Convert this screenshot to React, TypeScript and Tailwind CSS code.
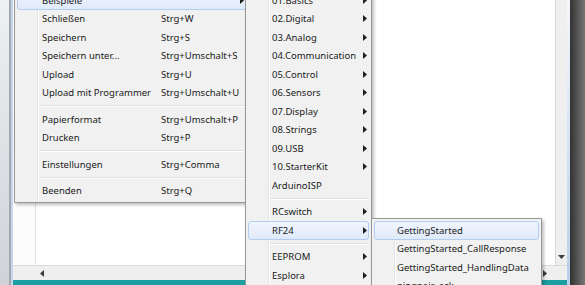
import React from 'react';

type Entry = {
    label?: string;
    shortcut?: string;
    sub?: boolean;
    active?: boolean;
    sep?: boolean;
};

const FILE_MENU: Entry[] = [
    { label: 'Beispiele', sub: true, active: true },
    { label: 'Schließen', shortcut: 'Strg+W' },
    { label: 'Speichern', shortcut: 'Strg+S' },
    { label: 'Speichern unter...', shortcut: 'Strg+Umschalt+S' },
    { label: 'Upload', shortcut: 'Strg+U' },
    { label: 'Upload mit Programmer', shortcut: 'Strg+Umschalt+U' },
    { sep: true },
    { label: 'Papierformat', shortcut: 'Strg+Umschalt+P' },
    { label: 'Drucken', shortcut: 'Strg+P' },
    { sep: true },
    { label: 'Einstellungen', shortcut: 'Strg+Comma' },
    { sep: true },
    { label: 'Beenden', shortcut: 'Strg+Q' },
];

const EXAMPLES_MENU: Entry[] = [
    { label: '01.Basics', sub: true },
    { label: '02.Digital', sub: true },
    { label: '03.Analog', sub: true },
    { label: '04.Communication', sub: true },
    { label: '05.Control', sub: true },
    { label: '06.Sensors', sub: true },
    { label: '07.Display', sub: true },
    { label: '08.Strings', sub: true },
    { label: '09.USB', sub: true },
    { label: '10.StarterKit', sub: true },
    { label: 'ArduinoISP' },
    { sep: true },
    { label: 'RCswitch', sub: true },
    { label: 'RF24', sub: true, active: true },
    { sep: true },
    { label: 'EEPROM', sub: true },
    { label: 'Esplora', sub: true },
    { label: 'Ethernet', sub: true },
];

const RF24_MENU: Entry[] = [
    { label: 'GettingStarted', active: true },
    { label: 'GettingStarted_CallResponse' },
    { label: 'GettingStarted_HandlingData' },
    { label: 'pingpair_ack' },
    { label: 'pingpair_dyn' },
];

const Caret = () => (
    <svg width="4" height="7" viewBox="0 0 4 7" className="shrink-0">
        <path d="M0 0 L4 3.5 L0 7 Z" fill="#1f1f1f" />
    </svg>
);

type MenuProps = {
    entries: Entry[];
    className: string;
    textIndent: string;
    labelWidth?: string;
    caretPad: string;
};

const Menu = ({ entries, className, textIndent, labelWidth, caretPad }: MenuProps) => (
    <div className={`absolute border border-[#979797] bg-[#f1f1f1] p-[2px] shadow-[2px_2px_3px_rgba(0,0,0,0.25)] ${className}`}>
        {/* icon gutter */}
        <div className="absolute top-0 bottom-0 left-[22px] w-px bg-[#e2e3e3]" />
        <div className="absolute top-0 bottom-0 left-[23px] w-px bg-white" />
        {entries.map((e, i) =>
            e.sep ? (
                <div key={i} className="relative h-[8px] flex flex-col justify-center pl-[22px]">
                    <div className="h-px bg-[#e0e0e0]" />
                    <div className="h-px bg-white" />
                </div>
            ) : (
                <div
                    key={i}
                    className={`relative flex items-center h-[18.5px] border rounded-[3px] ${
                        e.active
                            ? 'border-[#b3cdf0] bg-gradient-to-b from-[#f0f5fd] to-[#e0eaf9]'
                            : 'border-transparent'
                    }`}
                >
                    <span className={`shrink-0 whitespace-nowrap ${textIndent} ${labelWidth ?? ''}`}>{e.label}</span>
                    <span className="flex-1 whitespace-nowrap">{e.shortcut}</span>
                    {e.sub && (
                        <span className={caretPad}>
                            <Caret />
                        </span>
                    )}
                </div>
            )
        )}
    </div>
);

const SmallArrow = ({ dir }: { dir: 'left' | 'right' | 'down' }) => {
    const d = dir === 'left' ? 'M4 0 L0 3.5 L4 7 Z' : dir === 'right' ? 'M0 0 L4 3.5 L0 7 Z' : 'M0 0 L7 0 L3.5 4 Z';
    const w = dir === 'down' ? 7 : 4;
    const h = dir === 'down' ? 4 : 7;
    return (
        <svg width={w} height={h} viewBox={`0 0 ${w} ${h}`}>
            <path d={d} fill="#3c3c3c" />
        </svg>
    );
};

export default function App() {
    return (
        <div className="relative w-[585px] h-[285px] overflow-hidden flex text-[9.5px] leading-none text-[#1a1a1a] font-['Noto_Sans',sans-serif]">
            {/* left window frame */}
            <div className="flex w-[13px] shrink-0">
                <div className="w-[9px] bg-gradient-to-b from-[#eef0f2] to-[#cfd3d8]" />
                <div className="w-[2px] bg-[#a3a9b0]" />
                <div className="w-[2px] bg-[#c3d7ee]" />
            </div>

            {/* window content */}
            <div className="flex flex-col w-[554px] shrink-0">
                <div className="flex flex-1">
                    <div className="w-[23px] bg-[#fcfcfc] border-r border-[#e4e4e4]" />
                    <div className="flex-1 bg-white" />
                    <div className="w-[12px] bg-[#efefef] border-l border-[#d8d8d8] flex flex-col justify-end items-center pb-[6px]">
                        <SmallArrow dir="down" />
                    </div>
                </div>
                <div className="h-[15px] bg-[#efefef] border-t border-[#dadada] flex items-center">
                    <div className="w-[27px]" />
                    <SmallArrow dir="left" />
                    <div className="flex-1" />
                    <SmallArrow dir="right" />
                    <div className="w-[20px]" />
                </div>
                <div className="h-[5px] bg-[#1c9fa3]" />
            </div>

            {/* right window frame + desktop shadow */}
            <div className="w-[3px] bg-gradient-to-b from-[#f4f7fb] to-[#b7cfea]" />
            <div className="flex-1 bg-gradient-to-r from-[#333333] to-[#777777]" />

            {/* open menus */}
            <Menu
                entries={FILE_MENU}
                className="left-[14px] top-[-12px] w-[236px]"
                textIndent="pl-[24px]"
                labelWidth="w-[143px]"
                caretPad="pr-[2px]"
            />
            <Menu
                entries={EXAMPLES_MENU}
                className="left-[245px] top-[-12px] w-[127px]"
                textIndent="pl-[23px]"
                caretPad="pr-[1px]"
            />
            <Menu
                entries={RF24_MENU}
                className="left-[371px] top-[218px] w-[171px]"
                textIndent="pl-[22px]"
                caretPad="pr-[1px]"
            />
        </div>
    );
}
